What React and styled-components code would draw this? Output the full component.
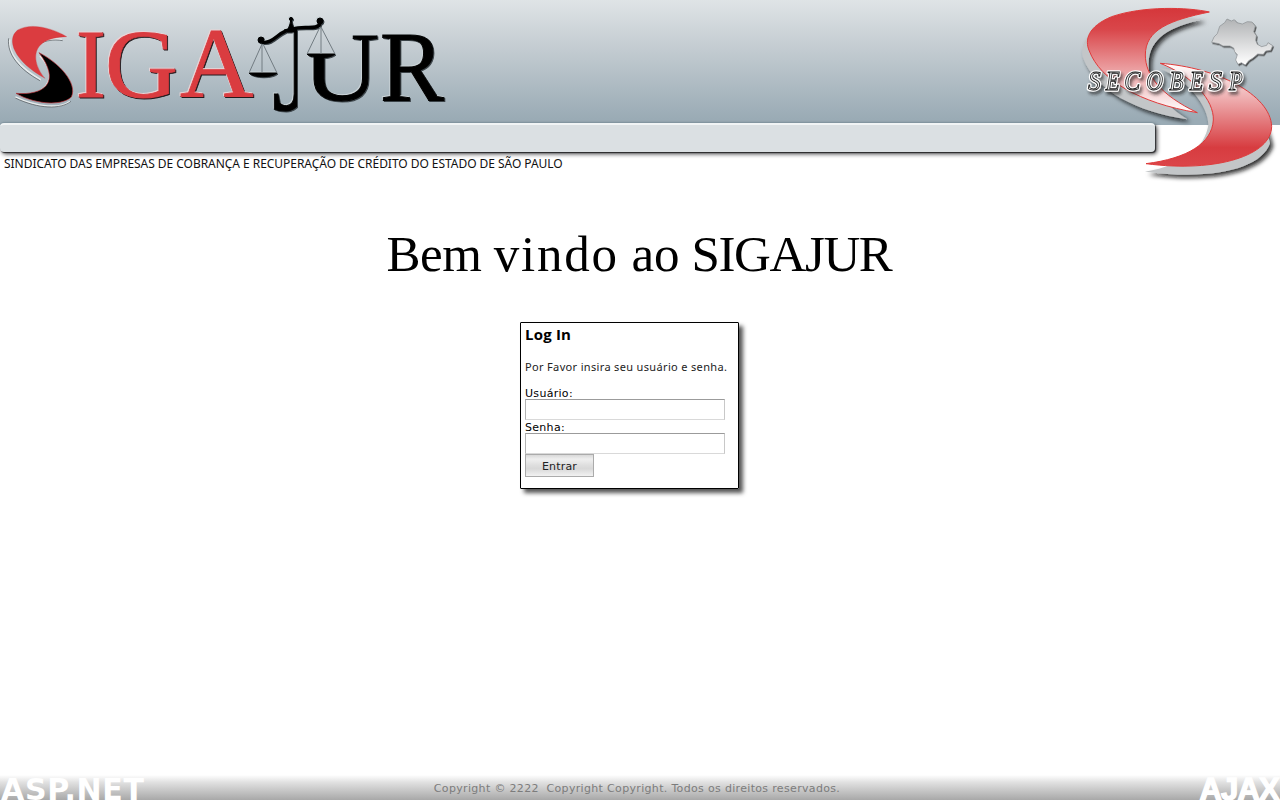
import React from 'react';
import styled, { createGlobalStyle } from 'styled-components';

const GlobalStyle = createGlobalStyle`
  * { box-sizing: border-box; }
  body { margin: 0; background: #fff; color: #000; font-family: Verdana, "DejaVu Sans", sans-serif; font-size: 11px; overflow: hidden; }
`;

const Page = styled.div`
  height: 100vh;
  display: flex;
  flex-direction: column;
`;

const Header = styled.header`
  position: relative;
  flex: none;
`;

const Banner = styled.div`
  height: 125px;
  background: linear-gradient(#dfe4e6, #c6ced3 35%, #9aabb5 95%);
`;

const Wordmark = styled.svg`
  display: block;
  width: 460px;
  height: 123px;
  overflow: hidden;
`;

const RedLetters = styled.g`
  fill: #da3c40;
  stroke: #da3c40;
  stroke-width: 0.8px;
  filter: drop-shadow(-0.7px -0.6px 0 #ead4d6) drop-shadow(1.4px 1.4px 0.5px #241a1d);
`;

const BlackLetters = styled.g`
  fill: #000;
  stroke: #000;
  stroke-width: 1px;
  filter: drop-shadow(-0.7px -0.6px 0 #c9d2d6) drop-shadow(1.3px 1.3px 0.6px #3a4247);
`;

const Strip = styled.div`
  width: 1155px;
  height: 29px;
  margin-top: -2px;
  position: relative;
  background: #dbe0e3;
  border-top: 2px solid #f1f4f5;
  border-radius: 4px;
  box-shadow: 0 -1px 1px #8295a0, 1px 1px 1px #29292b, 2px 2px 4px #454548;
`;

const Tagline = styled.div`
  padding: 4px 0 0 4px;
  font-family: "Noto Sans", sans-serif;
  font-size: 12px;
  line-height: 15px;
  letter-spacing: -0.04px;
  color: #111;
  white-space: nowrap;
`;

const Emblem = styled.svg`
  position: absolute;
  top: 0;
  right: 0;
  width: 210px;
  height: 190px;
`;

const Main = styled.main`
  flex: 1;
  display: flex;
  flex-direction: column;
  align-items: center;
`;

const Title = styled.h1`
  margin: 54px 0 0;
  padding-right: 2px;
  font-family: "Palatino Linotype", "Liberation Serif", serif;
  font-weight: 400;
  font-size: 51px;
  line-height: 58px;
  white-space: nowrap;
`;

const Word = styled.span`
  letter-spacing: ${(p) => p.$tracking}px;
`;

const LoginBox = styled.form`
  width: 219px;
  height: 167px;
  margin: 39px 21px 0 0;
  padding: 2px 4px;
  border: 1px solid #000;
  border-radius: 1px;
  box-shadow: 4px 4px 4px #555;
  display: flex;
  flex-direction: column;
  align-items: flex-start;
`;

const LoginTitle = styled.h2`
  margin: 0;
  font-family: "Open Sans", sans-serif;
  font-weight: 700;
  font-size: 15px;
  line-height: 19px;
  letter-spacing: 0.2px;
`;

const Hint = styled.p`
  margin: 16px 0 13px;
  font-family: "Noto Sans", sans-serif;
  font-size: 11px;
  line-height: 14px;
  letter-spacing: 0.34px;
  color: #222;
  white-space: nowrap;
`;

const Label = styled.label`
  height: 12px;
  line-height: 13px;
  letter-spacing: 0.3px;
  & ~ & { height: 13px; line-height: 15px; }
`;

const Field = styled.input`
  width: 200px;
  height: 21px;
  padding: 0 3px;
  border: 1px solid;
  border-color: #9b9b9b #c8c8c8 #d9d9d9 #b3b3b3;
  background: #fff;
  outline: none;
`;

const Submit = styled.button`
  width: 69px;
  height: 23px;
  padding: 2px 0 0;
  border: 1px solid #ababab;
  font: inherit;
  letter-spacing: 0.2px;
  color: #222;
  background: linear-gradient(#d9d9d9, #efefef 20%, #dedede 50%, #d8d8d8 65%, #f2f2f2);
`;

const Footer = styled.footer`
  flex: none;
  height: 25px;
  display: flex;
  justify-content: space-between;
  align-items: center;
  overflow: hidden;
  background: linear-gradient(#fff, #e0e0e0 30%, #a8a8a8);
`;

const Tech = styled.span`
  width: 220px;
  padding: 4px ${(p) => (p.$right ? 1 : 0)}px 0 ${(p) => (p.$right ? 0 : 1)}px;
  color: #fff;
  font-family: ${(p) => (p.$right ? '"Liberation Sans"' : '"DejaVu Sans"')}, sans-serif;
  font-weight: 700;
  font-size: ${(p) => (p.$right ? 31 : 30)}px;
  line-height: 29px;
  letter-spacing: ${(p) => (p.$right ? -0.8 : 0.7)}px;
  text-align: ${(p) => (p.$right ? 'right' : 'left')};
  ${(p) => p.$right && '-webkit-text-stroke: 1.4px #fff;'}
`;

const Copyright = styled.span`
  color: #7c7c7c;
  white-space: pre;
  letter-spacing: 0.33px;
  margin: 1px 6px 0 0;
`;

const Letter = ({ char, x, y, size, width }) => (
  <text x={x} y={y} fontSize={size} textLength={width} lengthAdjust="spacingAndGlyphs">{char}</text>
);

const SigajurLogo = () => (
  <Wordmark viewBox="0 0 460 123" fontFamily="Liberation Serif, serif">
    <defs>
      <clipPath id="jStem"><path d="M265 29H297V118H265Z" /></clipPath>
      <clipPath id="uBody"><path d="M309 56H350V20H390V115H309Z" /></clipPath>
    </defs>
    <g transform="scale(.33333)">
      <g fill="none" stroke="#e7ebec" strokeWidth="5">
        <path d="M29 118C23 160 60 204 122 239M185 118C160 115 135 122 120 132M120 168C165 215 153 253 115 276M46 291C115 324 182 326 210 304" />
      </g>
      <g fill="none" stroke="#4a5054" strokeWidth="2">
        <path d="M26 115C20 163 58 208 120 242M46 294C115 327 182 329 213 304M188 122C160 117 137 122 120 132" />
      </g>
      <path fill="#db3c40" stroke="#cc2e34" strokeWidth="1" d="M200 110C155 83 90 67 52 91C18 119 42 184 135 235C99 195 79 113 200 110Z" />
      <path fill="#000" stroke="#b82c32" strokeWidth="2" d="M117 158C177 188 234 250 214 291C180 322 95 309 48 280C130 287 186 249 117 158Z" />
    </g>
    <RedLetters>
      <Letter char="I" x={76} y={97} size={97} width={30} />
      <Letter char="G" x={105} y={97} size={97} width={73} />
      <Letter char="A" x={180} y={97} size={99} width={73.5} />
    </RedLetters>
    <BlackLetters>
      <g clipPath="url(#jStem)"><Letter char="J" x={272} y={110} size={128} width={43} /></g>
      <g clipPath="url(#uBody)"><Letter char="U" x={303} y={100} size={98} width={76} /></g>
      <Letter char="R" x={380} y={100} size={99} width={64} />
      <path fill="none" strokeWidth="3.4" d="M262 42C273 45 280 29 293 29C303 25 318 31 320 23" />
      <circle cx="261" cy="40" r="3" /><circle cx="320" cy="21" r="3" />
      <circle cx="291" cy="19" r="1.6" /><path d="M287 32L290 24L291 19L292 24L296 32Z" />
      <path d="M249 73H277C272 78 254 78 249 73ZM307 54H335C330 59 312 59 307 54Z" />
    </BlackLetters>
    <path fill="none" stroke="#727c82" strokeWidth="1" d="M262 44L249 73M262 44V72M263 44L277 73M320 27L307 54M321 27V54M321 27L335 54" />
  </Wordmark>
);

const TOP_BLADE = 'M418 36C355 22 220 17 125 50C54 79 43 120 58 153C91 240 208 309 382 338C270 284 226 225 226 165C226 88 302 60 418 36Z';
const LOW_BLADE = 'M268 190C436 202 598 283 602 379C601 465 440 519 225 491C350 475 423 430 427 360C429 300 365 228 268 190Z';

const NAME = [['S', 54, 38], ['E', 107, 42], ['C', 163, 48], ['O', 229, 50], ['B', 298, 43], ['E', 359, 41], ['S', 416, 40], ['P', 477, 41]];

const NameLetters = () => NAME.map(([char, x, width]) => (
  <Letter key={x} char={char} x={x} y={269} size={79} width={width} />
));

const SecobespEmblem = () => (
  <Emblem viewBox="0 0 630 570">
    <defs>
      <linearGradient id="topRed" x1="0" y1="0" x2="0" y2="1">
        <stop offset="0" stopColor="#d5373b" /><stop offset=".2" stopColor="#d9464a" /><stop offset="1" stopColor="#fff" />
      </linearGradient>
      <linearGradient id="lowRed" x1="0" y1="0" x2="0" y2="1">
        <stop offset="0" stopColor="#fff" /><stop offset=".82" stopColor="#d73c40" /><stop offset="1" stopColor="#db4549" />
      </linearGradient>
      <linearGradient id="mapGrey" x1="0" y1="0" x2="0" y2="1">
        <stop offset="0" stopColor="#b1b3b5" /><stop offset="1" stopColor="#fff" />
      </linearGradient>
      <filter id="soft" x="-20%" y="-20%" width="140%" height="140%">
        <feDropShadow dx="9" dy="9" stdDeviation="6" floodColor="#111" floodOpacity=".85" />
      </filter>
      <filter id="mapShadow" x="-20%" y="-20%" width="140%" height="140%">
        <feDropShadow dx="3" dy="4" stdDeviation="2" floodColor="#333" floodOpacity=".8" />
      </filter>
      <filter id="textShadow" x="-10%" y="-30%" width="130%" height="180%">
        <feDropShadow dx="6" dy="9" stdDeviation="4" floodColor="#222" floodOpacity=".6" />
      </filter>
    </defs>
    <g filter="url(#soft)" fill="#c3c6c8">
      <path d="M400 58C350 53 230 40 110 70C46 98 27 140 41 178C76 270 200 337 352 358C260 300 234 240 236 190C238 115 300 80 400 58Z" />
      <path d="M268 205C430 220 578 300 600 430C575 505 430 543 225 515C345 495 405 440 415 375C416 320 355 240 268 205Z" />
    </g>
    <path d={TOP_BLADE} fill="url(#topRed)" stroke="#df3a3a" strokeWidth="3" />
    <path d={LOW_BLADE} transform="translate(3 0)" fill="url(#lowRed)" stroke="#df3a3a" strokeWidth="3" />
    <path filter="url(#mapShadow)" fill="url(#mapGrey)" stroke="#898e91" strokeWidth="2" d="M425 127L432 111L442 101L449 79L464 68L471 57L484 63L493 59L501 68L517 72L532 65L546 66L556 78L551 95L559 107L557 121L562 133L575 140L590 136L594 128L608 137L602 151L587 153L580 163L563 162L549 174L536 182L526 195L514 188L504 193L497 180L502 164L494 155L491 144L480 138L459 138L447 131Z" />
    <g filter="url(#textShadow)" fontFamily="Liberation Serif, serif" fontStyle="italic">
      <g stroke="#fff" strokeWidth="10" strokeLinejoin="round"><NameLetters /></g>
      <g aria-hidden="true" fill="#eef0f1" stroke="#111" strokeWidth="2.6"><NameLetters /></g>
    </g>
  </Emblem>
);

export default function App() {
  return (
    <Page>
      <GlobalStyle />
      <Header>
        <Banner><SigajurLogo /></Banner>
        <Strip />
        <Tagline>SINDICATO DAS EMPRESAS DE COBRANÇA E RECUPERAÇÃO DE CRÉDITO DO ESTADO DE SÃO PAULO</Tagline>
        <SecobespEmblem />
      </Header>
      <Main>
        <Title>
          <Word $tracking={-0.5}>Bem </Word>
          <Word $tracking={1.8}>vindo</Word>{' '}
          <Word $tracking={-0.3}>ao </Word>
          <Word $tracking={-1.4}>SIGAJUR</Word>
        </Title>
        <LoginBox onSubmit={(e) => e.preventDefault()}>
          <LoginTitle>Log In</LoginTitle>
          <Hint>Por Favor insira seu usuário e senha.</Hint>
          <Label htmlFor="user">Usuário:</Label>
          <Field id="user" />
          <Label htmlFor="password">Senha:</Label>
          <Field id="password" type="password" />
          <Submit type="submit">Entrar</Submit>
        </LoginBox>
      </Main>
      <Footer>
        <Tech>ASP.NET</Tech>
        <Copyright>{'Copyright © 2222  Copyright Copyright. Todos os direitos reservados.'}</Copyright>
        <Tech $right>AJAX</Tech>
      </Footer>
    </Page>
  );
}
